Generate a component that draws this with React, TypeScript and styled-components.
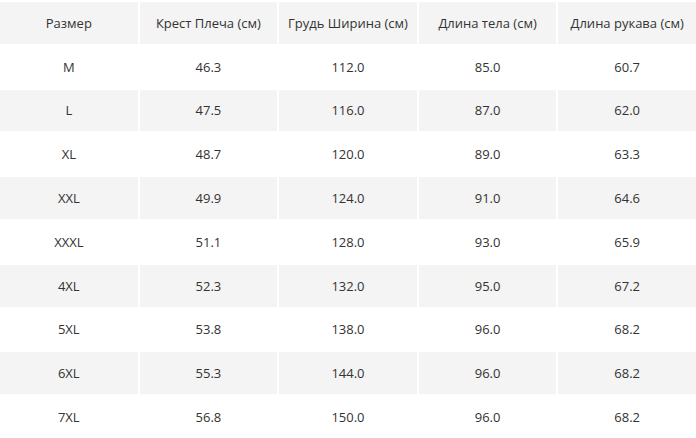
import React from 'react';
import styled, { createGlobalStyle } from 'styled-components';

const GlobalStyle = createGlobalStyle`
  html, body {
    margin: 0;
    padding: 0;
    background: #fff;
  }
  body {
    font-family: 'Open Sans', 'Liberation Sans', sans-serif;
  }
`;

const SizeTable = styled.div`
  width: 696px;
  height: 438px;
  box-sizing: border-box;
  padding-top: 2px;
  display: grid;
  grid-template-columns: repeat(5, 1fr);
  grid-auto-rows: 41.8px;
  gap: 2px;
  background: #fff;
`;

const Cell = styled.div<{ $shaded: boolean }>`
  display: flex;
  align-items: center;
  justify-content: center;
  background: ${(p) => (p.$shaded ? '#f4f4f4' : '#fff')};
  color: #333;
  font-size: 13px;
  white-space: nowrap;
`;

const headers = ['Размер', 'Крест Плеча (см)', 'Грудь Ширина (см)', 'Длина тела (см)', 'Длина рукава (см)'];

const rows = [
  ['M', '46.3', '112.0', '85.0', '60.7'],
  ['L', '47.5', '116.0', '87.0', '62.0'],
  ['XL', '48.7', '120.0', '89.0', '63.3'],
  ['XXL', '49.9', '124.0', '91.0', '64.6'],
  ['XXXL', '51.1', '128.0', '93.0', '65.9'],
  ['4XL', '52.3', '132.0', '95.0', '67.2'],
  ['5XL', '53.8', '138.0', '96.0', '68.2'],
  ['6XL', '55.3', '144.0', '96.0', '68.2'],
  ['7XL', '56.8', '150.0', '96.0', '68.2'],
];

const App: React.FC = () => {
  const all = [headers, ...rows];
  return (
    <>
      <GlobalStyle />
      <SizeTable>
        {all.map((row, i) =>
          row.map((value, j) => (
            <Cell key={`${i}-${j}`} $shaded={i % 2 === 0}>
              {value}
            </Cell>
          ))
        )}
      </SizeTable>
    </>
  );
};

export default App;
